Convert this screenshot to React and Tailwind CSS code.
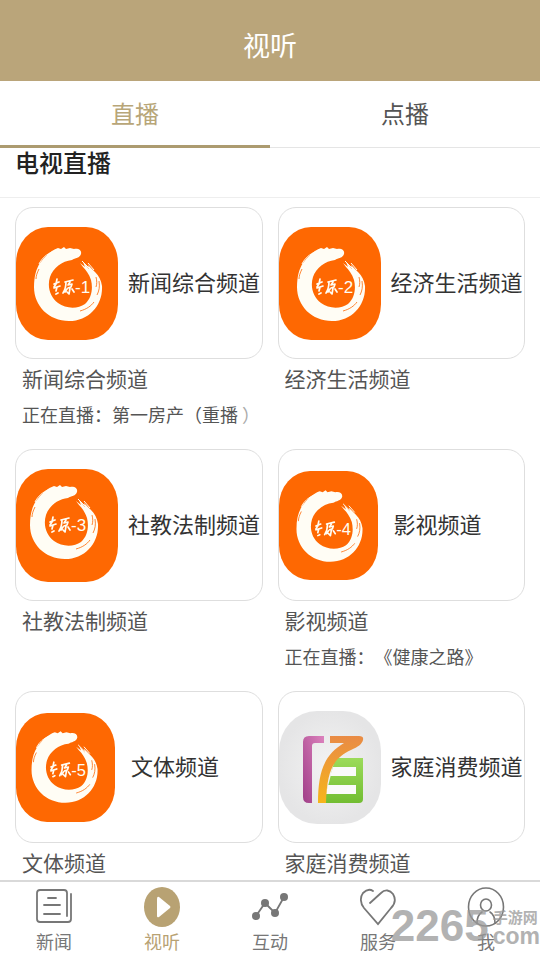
import { useState } from "react";

const tabs = ["直播", "点播"];

const channels = [
  { name: "新闻综合频道", no: 1, live: "第一房产（重播 ", tail: "）" },
  { name: "经济生活频道", no: 2 },
  { name: "社教法制频道", no: 3, ring: "translate(-4 -4)" },
  { name: "影视频道", no: 4, small: true, live: "《健康之路》" },
  { name: "文体频道", no: 5, small: true, ring: "translate(-2 -1)" },
  { name: "家庭消费频道" },
];

const RingLogo = ({ no, ring, small }) => (
  <svg
    viewBox="0 0 102 113"
    preserveAspectRatio="none"
    className={`shrink-0 ${small ? "h-[109px] w-[99px]" : "h-[113px] w-[102px]"}`}
    aria-hidden="true"
  >
    <rect width="102" height="113" rx="32" ry="36" fill="#fe6802" />
    <g transform={ring}>
      {/* brush ring with the dragon head at its upper end */}
      <path
        d="M24 36C30 28 36 23 42 21L45 22 48 20 50 22 54 21 58 22C62 21 66 23 65 27C64 31 59 31 56 33C46 34 37 41 34 50C31 60 34 70 42 76C50 82 62 82 69 77C76 71 77 61 75 53C73 47 70 43 67 40L64 36 69 40 67 35 73 42 72 38 79 45C83 49 85 53 86 59C87 78 73 94 53 94C33 94 18 79 18 60C18 50 20 42 24 36z"
        fill="#fffdf5"
      />
      <path d="M23 37c3-6 8-10 13-12M66 34l8 8M72 36l6 7" stroke="#fffdf5" strokeWidth="1" fill="none" />
      <path
        d="M23 42c-2 4-3 7-3 10M83 54c1 6 0 10-2 14M64 84c7-2 11-5 14-9M80 50c1 4 1 7 0 10"
        stroke="#fe6802"
        strokeWidth="0.8"
        fill="none"
      />
      {/* calligraphy */}
      <g stroke="#fffdf5" strokeWidth="1.7" strokeLinecap="round" strokeLinejoin="round" fill="none">
        <path d="M38 57l5-2M41 52l-1 5-2 3M38 61l6-2M41 60l-1 4M40 67l2-1" />
        <path d="M49 55l8-2M50 55c0 5-1 8-3 11M54 55l-2 3 4-1-1 3-3 1M54 61l-1 6-2-2M51 62l-2 3M56 62l2 3" />
      </g>
      <text x="59" y="66" fontSize="17" fill="#fffdf5" className="font-['Liberation_Sans',sans-serif]">
        -{no}
      </text>
    </g>
  </svg>
);

const FamilyLogo = () => (
  <svg viewBox="0 0 102 113" className="h-[113px] w-[102px] shrink-0" aria-hidden="true">
    <defs>
      <radialGradient id="tile">
        <stop offset="0" stopColor="#f3f3f3" />
        <stop offset="1" stopColor="#e5e5e6" />
      </radialGradient>
      <linearGradient id="plum" x1="0" y1="1" x2="1" y2="0">
        <stop offset="0" stopColor="#a03f88" />
        <stop offset="1" stopColor="#dc82bd" />
      </linearGradient>
      <linearGradient id="amber" x1="0" y1="1" x2="0" y2="0">
        <stop offset="0" stopColor="#f6b51b" />
        <stop offset="1" stopColor="#e98b45" />
      </linearGradient>
      <linearGradient id="leaf" x1="0" y1="0" x2="0" y2="1">
        <stop offset="0" stopColor="#9cdb5a" />
        <stop offset="1" stopColor="#72bd32" />
      </linearGradient>
    </defs>
    <rect width="102" height="113" rx="38" ry="40" fill="url(#tile)" />
    <path d="M33 92h-3q-6 0-6-6V31q0-6 6-6h15v7H36q-3 0-3 3z" fill="url(#plum)" />
    <path d="M56 47h28v41q0 4-4 4H45l11-45z" fill="url(#leaf)" />
    <path d="M54 56h23v9H51zM49 74h28v9H47z" fill="#fafafa" />
    <path d="M51 25h29q5 0 4 4c-1 4-5 7-12 10-17 8-24 19-25 53h-8c0-31 6-48 26-60H51z" fill="url(#amber)" />
  </svg>
);

const ChannelCard = ({ channel }) => (
  <a href="#channel" className="block min-h-[232px] min-w-0 text-[#555]">
    <div className="flex h-[152px] items-center gap-2.5 overflow-hidden rounded-[18px] border border-[#dedede]">
      {channel.no ? <RingLogo no={channel.no} ring={channel.ring} small={channel.small} /> : <FamilyLogo />}
      <span className={`flex-1 pb-1 text-[22px] whitespace-nowrap text-[#333] ${channel.small ? "pl-1.5" : ""}`}>
        {channel.name}
      </span>
    </div>
    <h3 className="px-[7px] pt-0.5 text-[21px] leading-[35px]">{channel.name}</h3>
    {channel.live && (
      <p className="px-[7px] text-lg leading-9 whitespace-nowrap [text-spacing-trim:space-all]">
        正在直播：{channel.live}
        {channel.tail && <span className="text-[#aaa]">{channel.tail}</span>}
      </p>
    )}
  </a>
);

const icons = {
  news: (
    <g fill="none" stroke="currentColor" strokeWidth="1.8" strokeLinecap="round">
      <path d="M35 6v25q0 3-3 3H4q-3 0-3-3V5q0-3 3-3h24q3 0 3 3v23" />
      <path d="M12 10h8M8 17h16M8 26h16" />
    </g>
  ),
  play: (
    <>
      <ellipse cx="18" cy="19" rx="18" ry="20" fill="currentColor" />
      <path d="M13 11v17q0 2 2 1l11-9q1-1 0-2l-11-9q-2-1-2 2z" fill="#fff" />
    </>
  ),
  chart: (
    <g fill="currentColor">
      <path d="M4 28l9-13 10 10 9-16" fill="none" stroke="currentColor" strokeWidth="1.8" />
      <circle cx="4" cy="28" r="4" />
      <circle cx="13" cy="15" r="4" />
      <circle cx="23" cy="25" r="4" />
      <circle cx="32" cy="9" r="4" />
    </g>
  ),
  heart: (
    <path
      d="M10 15L21 5c4-4 9-3 12 1 3 5 2 10-2 14L18 36 4 20C0 15 0 9 3 5 6 2 10 1 13 3"
      fill="none"
      stroke="currentColor"
      strokeWidth="1.8"
      strokeLinecap="round"
    />
  ),
  user: (
    <g fill="none" stroke="currentColor" strokeWidth="1.6" strokeLinecap="round">
      <ellipse cx="18" cy="19" rx="17.5" ry="19" />
      <ellipse cx="18" cy="17" rx="5.5" ry="6" />
      <path d="M9 35c0-6 2-9 5-11M27 35c0-6-2-9-5-11" />
    </g>
  ),
};

const navItems = [
  { label: "新闻", icon: "news" },
  { label: "视听", icon: "play" },
  { label: "互动", icon: "chart" },
  { label: "服务", icon: "heart" },
  { label: "我", icon: "user" },
];

const App = () => {
  const [tab, setTab] = useState("直播");
  const [page, setPage] = useState("视听");

  return (
    <div className="flex h-screen flex-col bg-white font-['Noto_Sans_CJK_SC',sans-serif]">
      <header className="bg-[#baa57a] pt-6 pb-4 text-center text-white">
        <h1 className="text-[27px] leading-[41px]">视听</h1>
      </header>

      <div className="flex h-[67px] shrink-0">
        {tabs.map((item) => (
          <button
            key={item}
            type="button"
            onClick={() => setTab(item)}
            className={`flex-1 text-2xl ${tab === item ? "border-b-3 border-[#ac9b70] text-[#b8a678]" : "border-b border-[#e5e5e5] pb-0.5 text-[#555]"}`}
          >
            {item}
          </button>
        ))}
      </div>

      <h2 className="border-b border-[#eee] px-[15px] pb-[22px] text-2xl leading-[27px] font-medium text-[#222]">电视直播</h2>

      <main className="min-h-0 flex-1 overflow-y-auto [scrollbar-width:none]">
        <div className="grid grid-cols-2 gap-x-[15px] gap-y-[10px] px-[15px] pt-[9px]">
          {channels.map((channel) => (
            <ChannelCard key={channel.name} channel={channel} />
          ))}
        </div>
      </main>

      <nav className="relative flex h-20 shrink-0 border-t-2 border-[#d9d9d9] bg-white">
        {navItems.map((item) => (
          <button
            key={item.label}
            type="button"
            onClick={() => setPage(item.label)}
            className={`flex flex-1 flex-col items-center pt-[5px] ${page === item.label ? "text-[#b8a273]" : "text-[#777]"}`}
          >
            <svg viewBox="-1 -1 38 41" className="h-[41px] w-[38px]" aria-hidden="true">
              {icons[item.icon]}
            </svg>
            <span className="text-lg leading-[26px]">{item.label}</span>
          </button>
        ))}
        <div className="pointer-events-none absolute right-0 bottom-3.5 flex items-end gap-1 font-['Liberation_Sans','Noto_Sans_CJK_SC',sans-serif] font-bold text-[#999] opacity-75">
          <span className="text-[44px] leading-10">2265</span>
          <span className="flex flex-col">
            <span className="text-[15px] leading-4">手游网</span>
            <span className="text-[23px] leading-5">com</span>
          </span>
        </div>
      </nav>
    </div>
  );
};

export default App;
